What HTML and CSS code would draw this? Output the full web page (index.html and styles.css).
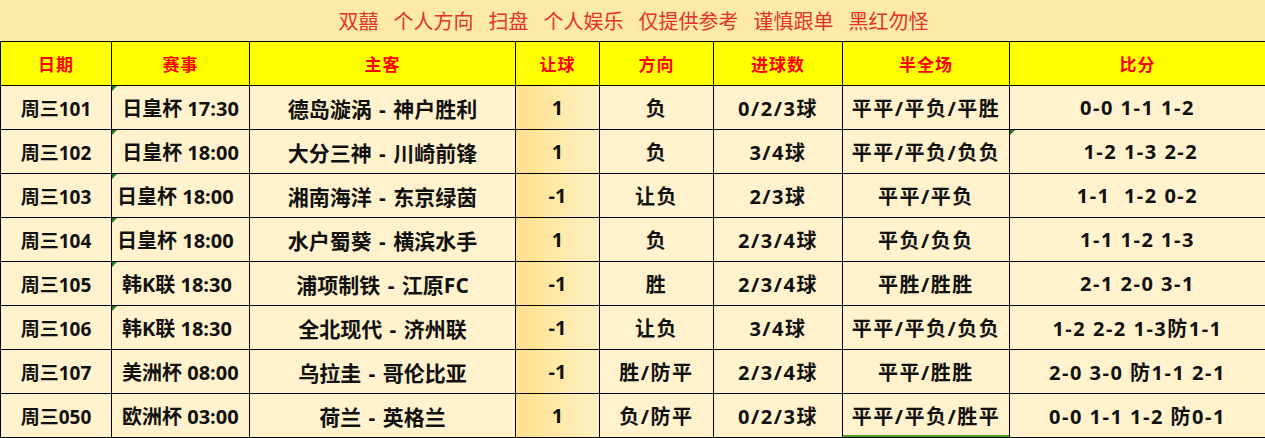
FILE: index.html
```html
<!DOCTYPE html>
<html lang="zh-CN">
<head>
<meta charset="utf-8">
<title>双囍</title>
<link rel="stylesheet" href="styles.css">
</head>
<body>
<div class="title">
  <span>双囍</span><span>个人方向</span><span>扫盘</span><span>个人娱乐</span><span>仅提供参考</span><span>谨慎跟单</span><span>黑红勿怪</span>
</div>
<table class="sheet">
  <colgroup>
    <col class="c1"><col class="c2"><col class="c3"><col class="c4"><col class="c5"><col class="c6"><col class="c7"><col class="c8">
  </colgroup>
  <thead>
    <tr>
      <th>日期</th><th>赛事</th><th>主客</th><th>让球</th><th>方向</th><th>进球数</th><th>半全场</th><th>比分</th>
    </tr>
  </thead>
  <tbody>
    <tr>
      <td class="date">周三101</td><td class="ev mark">日皇杯 17:30</td><td class="team">德岛漩涡 - 神户胜利</td><td class="hc">1</td><td class="wide">负</td><td class="wide">0/2/3球</td><td class="wide">平平/平负/平胜</td><td class="wide">0-0 1-1 1-2</td>
    </tr>
    <tr>
      <td class="date">周三102</td><td class="ev mark">日皇杯 18:00</td><td class="team">大分三神 - 川崎前锋</td><td class="hc">1</td><td class="wide">负</td><td class="wide">3/4球</td><td class="wide">平平/平负/负负</td><td class="wide mark">&nbsp;1-2 1-3 2-2</td>
    </tr>
    <tr>
      <td class="date">周三103</td><td class="ev mark la">日皇杯 18:00</td><td class="team">湘南海洋 - 东京绿茵</td><td class="hc">-1</td><td class="wide">让负</td><td class="wide">2/3球</td><td class="wide">平平/平负</td><td class="wide">1-1&nbsp; 1-2 0-2</td>
    </tr>
    <tr>
      <td class="date">周三104</td><td class="ev mark la">日皇杯 18:00</td><td class="team">水户蜀葵 - 横滨水手</td><td class="hc">1</td><td class="wide">负</td><td class="wide">2/3/4球</td><td class="wide">平负/负负</td><td class="wide">1-1 1-2 1-3</td>
    </tr>
    <tr>
      <td class="date">周三105</td><td class="ev mark lb">韩K联 18:30</td><td class="team">浦项制铁 - 江原FC</td><td class="hc">-1</td><td class="wide">胜</td><td class="wide">2/3/4球</td><td class="wide">平胜/胜胜</td><td class="wide">2-1 2-0 3-1</td>
    </tr>
    <tr>
      <td class="date">周三106</td><td class="ev mark lb">韩K联 18:30</td><td class="team">全北现代 - 济州联</td><td class="hc">-1</td><td class="wide">让负</td><td class="wide">3/4球</td><td class="wide">平平/平负/负负</td><td class="wide">1-2 2-2 1-3防1-1</td>
    </tr>
    <tr>
      <td class="date">周三107</td><td class="ev lb">美洲杯 08:00</td><td class="team">乌拉圭 - 哥伦比亚</td><td class="hc">-1</td><td class="wide">胜/防平</td><td class="wide">2/3/4球</td><td class="wide">平平/胜胜</td><td class="wide">2-0 3-0 防1-1 2-1</td>
    </tr>
    <tr>
      <td class="date">周三050</td><td class="ev lb">欧洲杯 03:00</td><td class="team">荷兰 - 英格兰</td><td class="hc">1</td><td class="wide">负/防平</td><td class="wide">0/2/3球</td><td class="wide sel">平平/平负/胜平</td><td class="wide">0-0 1-1 1-2 防0-1</td>
    </tr>
  </tbody>
</table>
</body>
</html>
```

FILE: styles.css
```css
html, body {
  margin: 0;
  padding: 0;
}

body {
  background: #fde9a8;
  width: 1265px;
  height: 438px;
  overflow: hidden;
}

.title {
  height: 41px;
  display: flex;
  justify-content: center;
  align-items: center;
  gap: 15px;
  padding-left: 2px;
  font-family: "Noto Sans CJK SC", sans-serif;
  font-size: 20px;
  font-weight: 400;
  color: #e2332b;
  background: #fde9a8;
}

.sheet {
  width: 1265px;
  border-collapse: collapse;
  table-layout: fixed;
  font-family: "Open Sans", "Noto Sans CJK SC", sans-serif;
}

.c1 { width: 111px; }
.c2 { width: 138px; }
.c3 { width: 266px; }
.c4 { width: 84px; }
.c5 { width: 114px; }
.c6 { width: 129px; }
.c7 { width: 167px; }
.c8 { width: 256px; }

.sheet th,
.sheet td {
  border: 1px solid #000;
  height: 43px;
  padding: 0;
  text-align: center;
  vertical-align: middle;
  white-space: nowrap;
  overflow: hidden;
}

.sheet th {
  background: #ffff00;
  color: #f00;
  font-family: "Noto Sans CJK SC", sans-serif;
  font-size: 17px;
  font-weight: 700;
  letter-spacing: 1px;
}

.sheet td {
  background: #fff2cc;
  color: #111;
  font-size: 20px;
  font-weight: 700;
  position: relative;
}

.sheet td.date {
  font-size: 19px;
}

.sheet td.team {
  font-size: 21px;
  word-spacing: 2px;
}

.sheet td.wide {
  letter-spacing: 1.5px;
}

.sheet td.hc {
  background: linear-gradient(to right, #ffdf8a 0%, #ffe9a8 50%, #fff0c4 100%);
}

.sheet td.la {
  text-align: left;
  padding-left: 5px;
}

.sheet td.lb {
  text-align: left;
  padding-left: 10px;
}

.sheet td.mark::before {
  content: "";
  position: absolute;
  left: 0;
  top: 0;
  width: 0;
  height: 0;
  border-top: 5px solid #1f7a1f;
  border-right: 5px solid transparent;
}

.sheet td.sel {
  box-shadow: inset 0 -2px 0 #5a9a2e;
}
```
